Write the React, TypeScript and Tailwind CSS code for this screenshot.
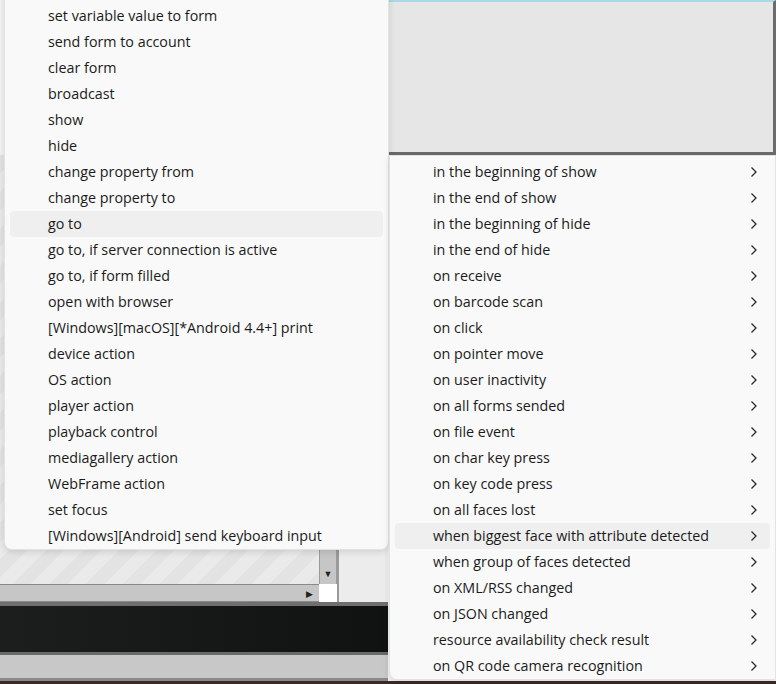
const actions = [
  "set variable value to form",
  "send form to account",
  "clear form",
  "broadcast",
  "show",
  "hide",
  "change property from",
  "change property to",
  "go to",
  "go to, if server connection is active",
  "go to, if form filled",
  "open with browser",
  "[Windows][macOS][*Android 4.4+] print",
  "device action",
  "OS action",
  "player action",
  "playback control",
  "mediagallery action",
  "WebFrame action",
  "set focus",
  "[Windows][Android] send keyboard input",
];

const events = [
  "in the beginning of show",
  "in the end of show",
  "in the beginning of hide",
  "in the end of hide",
  "on receive",
  "on barcode scan",
  "on click",
  "on pointer move",
  "on user inactivity",
  "on all forms sended",
  "on file event",
  "on char key press",
  "on key code press",
  "on all faces lost",
  "when biggest face with attribute detected",
  "when group of faces detected",
  "on XML/RSS changed",
  "on JSON changed",
  "resource availability check result",
  "on QR code camera recognition",
];

function Chevron() {
  return (
    <svg width="8" height="12" viewBox="0 0 8 12" className="shrink-0">
      <polyline
        points="1.5,1.5 6,6 1.5,10.5"
        fill="none"
        stroke="#2b2b2b"
        strokeWidth="1.3"
      />
    </svg>
  );
}

function MenuRow({
  label,
  active,
  sub,
}: {
  label: string;
  active?: boolean;
  sub?: boolean;
}) {
  return (
    <div
      className={
        "flex h-[26px] items-center rounded-[4px] pl-[38px] pr-[12px] " +
        (active ? "bg-[#efefef]" : "")
      }
    >
      <span className="flex-1 whitespace-nowrap">{label}</span>
      {sub && <Chevron />}
    </div>
  );
}

export default function App() {
  return (
    <div className="relative h-[684px] w-[776px] overflow-hidden bg-[#f0f0f0] font-['Open_Sans','Noto_Sans',sans-serif] text-[14.3px] text-[#1b1b1b]">
      {/* underlying window */}
      <div className="flex h-full flex-col">
        <div className="flex h-[155px]">
          <div className="w-[389px] bg-[#f3f3f3]" />
          <div className="flex-1 border-t-[2px] border-r-[3px] border-b-[3px] border-t-[#a9d8e8] border-r-[#6b6b6b] border-b-[#6b6b6b] bg-[#e6e6e6]" />
        </div>
        <div className="flex flex-1">
          <div className="flex w-[388px] flex-col">
            <div className="flex flex-1">
              <div className="flex w-[337px] flex-col">
                <div className="flex flex-1">
                  <div className="flex-1 bg-[repeating-linear-gradient(135deg,#e3e3e3_0px,#e3e3e3_13px,#eaeaea_13px,#eaeaea_26px)]" />
                  <div className="flex w-[18px] flex-col justify-end border-x border-[#9a9a9a] bg-[#c6c6c6]">
                    <div className="mb-[6px] flex justify-center text-[9px] leading-none text-[#222]">
                      ▼
                    </div>
                  </div>
                </div>
                <div className="flex h-[18px]">
                  <div className="flex flex-1 items-center justify-end border-y border-[#8a8a8a] bg-[#c6c6c6] pr-[6px] text-[9px] leading-none text-[#222]">
                    ▶
                  </div>
                  <div className="w-[18px] bg-white" />
                </div>
              </div>
              <div className="w-[2px] bg-[#9a9a9a]" />
              <div className="flex-1 bg-[#ececec]" />
            </div>
            <div className="h-[4px] bg-[#6f6f6f]" />
            <div className="h-[46px] bg-[linear-gradient(90deg,#1c1d1d,#151616_60%,#101111)]" />
            <div className="h-[3px] bg-[#6a6a6a]" />
            <div className="h-[23px] bg-[#c8c8c8]" />
            <div className="h-[3px] bg-[#8a8a8a]" />
          </div>
          <div className="flex-1 bg-[#f5f5f5]" />
        </div>
        <div className="h-[3px] bg-[#3b2a24]" />
      </div>

      {/* action menu */}
      <div className="absolute left-[4px] top-[-10px] w-[385px] rounded-b-[8px] border border-[#e3e3e3] bg-[#f9f9f9] px-[5px] pt-[12px] shadow-[0_2px_6px_rgba(0,0,0,0.12)]">
        {actions.map((a) => (
          <MenuRow key={a} label={a} active={a === "go to"} />
        ))}
      </div>

      {/* event submenu */}
      <div className="absolute left-[389px] top-[155px] w-[387px] rounded-bl-[8px] border border-[#e3e3e3] bg-[#f9f9f9] px-[5px] pt-[3px] shadow-[0_2px_6px_rgba(0,0,0,0.12)]">
        {events.map((e) => (
          <MenuRow
            key={e}
            label={e}
            sub
            active={e === "when biggest face with attribute detected"}
          />
        ))}
      </div>
    </div>
  );
}
